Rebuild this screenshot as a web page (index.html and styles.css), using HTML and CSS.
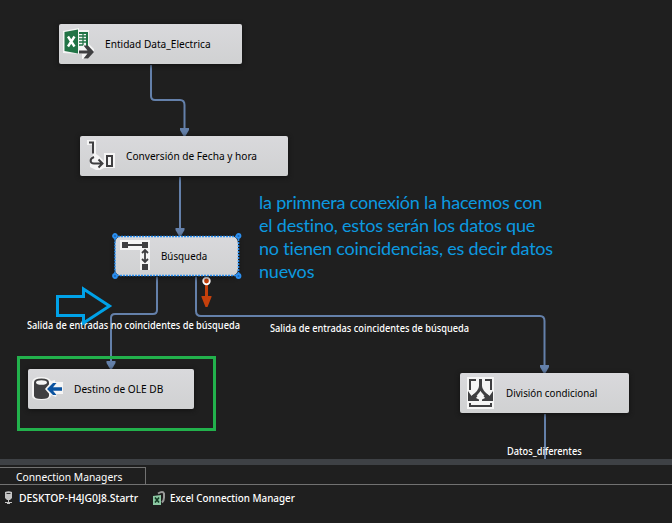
FILE: index.html
```html
<!DOCTYPE html>
<html lang="es">
<head>
<meta charset="utf-8">
<title>Data Flow</title>
<link rel="stylesheet" href="styles.css">
</head>
<body>
<main class="canvas">
  <svg class="wires" width="672" height="459" viewBox="0 0 672 459">
    <g class="wire">
      <path d="M151 65V96Q151 100 155 100H180Q184.500 100 184.500 105V130"/>
      <path d="M180 177V230"/>
      <path d="M157 277V310Q157 314 153 314H115Q111 314 111 318V363"/>
      <path d="M196 277V311Q196 316 201 316H540Q544.500 316 544.500 321V367"/>
      <path d="M545 414V459"/>
    </g>
    <g class="tip">
      <path d="M180 128h9v2l-3.500 6h-2l-3.500-6z"/>
      <path d="M175.500 228h9v2l-3.500 6h-2l-3.500-6z"/>
      <path d="M106.500 361h9v2l-3.500 6h-2l-3.500-6z"/>
      <path d="M540 365h9v2l-3.500 6h-2l-3.500-6z"/>
    </g>
    <path class="error" d="M205 284h3v12h3.500v1l-4 10h-2l-4-10v-1h3.500z"/>
    <circle class="error-dot" cx="206.500" cy="281" r="3.300"/>
  </svg>

  <section class="node source">
    <svg width="32" height="32" viewBox="0 0 32 32">
      <path fill="#f5f5f5" d="M0 3L16 0v2h10v14l5 5v3l-7 7h-5v-5L0 25z"/>
      <path fill="#217346" d="M1.500 4L15 1.500v24L1.500 23zM16 4h9v14h-2v-12h-7z"/>
      <path stroke="#217346" fill="none" stroke-width="1.300" d="M16 8h8M16 11h8M16 14h8M16 17h4M20 5v12"/>
      <path stroke="#fff" fill="none" stroke-width="2.400" d="M5 8.500l6.500 10M11.500 8.500l-6.500 10"/>
      <path fill="#3f3f41" d="M16 22.500h8.500l-4-5h4.500l6 6.500-6 6.500h-4.500l4-5H16z"/>
    </svg>
    <span>Entidad Data_Electrica</span>
  </section>

  <section class="node convert">
    <svg width="32" height="32" viewBox="0 0 32 32">
      <path fill="#f5f5f5" d="M3 0h9v14l3 2 5 5v-8h11v15H20l-4 2h-4l-6-3v-9l3-3V5H3z"/>
      <path fill="none" stroke="#3f3f41" stroke-width="2" d="M5 2.500h4V13.500M10 17c-5 2-4 6.500 0 6.500h7M14.500 19.500l4 4-4 4"/>
      <path fill="none" stroke="#3f3f41" stroke-width="2" d="M23 16h5v10h-5z"/>
    </svg>
    <span>Conversión de Fecha y hora</span>
  </section>

  <section class="node lookup">
    <svg width="32" height="32" viewBox="0 0 32 32">
      <path fill="#f5f5f5" d="M1 0h30v30H21V10H1z"/>
      <path fill="#3f3f41" d="M3 2h6v2h14V2h6v6h-6V6H9v2H3zM23 24h6v6h-6z"/>
      <path fill="none" stroke="#3f3f41" stroke-width="1.800" d="M26 10.500v11M23 13l3-3 3 3M23 19l3 3 3-3"/>
    </svg>
    <span>Búsqueda</span>
  </section>
  <svg class="selection" width="136" height="50" viewBox="0 0 136 50">
    <rect class="edge" x="5" y="4.500" width="123.500" height="39"/>
    <g class="handle"><circle cx="5" cy="4" r="2"/><circle cx="128.500" cy="4" r="2"/><circle cx="5" cy="44" r="2"/><circle cx="128.500" cy="44" r="2"/></g>
  </svg>

  <section class="node target">
    <svg width="32" height="32" viewBox="0 0 32 32">
      <path fill="#f5f5f5" d="M0 9Q1 4 9 4q8 0 10 4l4-1v2h8v12h-6l-1 3-5-2q0 5-9.500 5T0 23z"/>
      <path fill="#3f3f41" d="M2 9.500q0-4 7.500-4t7.500 4v13q0 3.500-7.500 3.500T2 22.500z"/>
      <ellipse cx="9.500" cy="9.500" rx="5.500" ry="2.300" fill="#f5f5f5"/>
      <path fill="#f5f5f5" d="M13 16l6-7v14z"/>
      <path fill="#0b53a0" d="M15 16l6-6h3.500l-3.500 4.200h9v3.600h-9l3.500 4.200H21z"/>
    </svg>
    <span>Destino de OLE DB</span>
  </section>

  <section class="node split">
    <svg width="32" height="32" viewBox="0 0 32 32">
      <path fill="#f5f5f5" d="M3 0h27v32H3z"/>
      <path fill="none" stroke="#3f3f41" stroke-width="2" d="M6 13V3h6M21 3h6v10M6 26v3h21v-3"/>
      <path fill="none" stroke="#3f3f41" stroke-width="3" d="M16.500 2v7q0 5-8 11M16.500 9q0 5 8 11"/>
      <path fill="#3f3f41" d="M4 14v10h11v-1.500l-3-1.500 1.500-2-3-2-3 2zM29 14v10H18v-1.500l3-1.500-1.500-2 3-2 3 2z"/>
    </svg>
    <span>División condicional</span>
  </section>

  <div class="frame"></div>
  <div class="caption nomatch">Salida de entradas no coincidentes de búsqueda</div>
  <div class="caption match">Salida de entradas coincidentes de búsqueda</div>
  <div class="caption differ">Datos_diferentes</div>
  <svg class="pointer" width="60" height="44" viewBox="0 0 60 44">
    <path d="M4.500 12.500H30.500V5L56.500 22 30.500 39V31.500H4.500z"/>
  </svg>
  <p class="note">la primnera conexión la hacemos con<br>el destino, estos serán los datos que<br>no tienen coincidencias, es decir datos<br>nuevos</p>
</main>
<footer class="managers">
  <div class="tabs"><div class="tab"><span>Connection Managers</span></div><div class="rest"></div></div>
  <div class="items">
    <div class="item server">
      <svg width="9" height="14" viewBox="0 0 9 14"><path fill="#c4c4c4" d="M1 1q3.500-1.500 7 0v6L6 9H5v2h3v1H6v1H3v-1H1v-1h3V9H3L1 7z"/><path fill="#333" d="M2.500 2h4v1h-4z"/></svg>
      <span>DESKTOP-H4JG0J8.Startr</span>
    </div>
    <div class="item excel">
      <svg width="14" height="14" viewBox="0 0 14 14"><path fill="none" stroke="#999" stroke-width="2" d="M5 2.500q5-3 6 0v4q0 3-2 5"/><path fill="#8cc8a3" d="M0 5l8-1v10H0z"/><path stroke="#143d25" stroke-width="1.600" d="M2 6.500l4 5M6 6.500l-4 5"/></svg>
      <span>Excel Connection Manager</span>
    </div>
  </div>
</footer>
</body>
</html>
```
FILE: styles.css
```css
* { box-sizing: border-box; }
body {
  margin: 0;
  width: 672px;
  height: 523px;
  overflow: hidden;
  display: flex;
  flex-direction: column;
  background: #1f1f1f;
  color: #fff;
  font: 11.5px/16px "Noto Sans", sans-serif;
}
.canvas { position: relative; height: 459px; flex: none; overflow: hidden; }
.wires { position: absolute; left: 0; top: 0; }
.wire { fill: none; stroke: #6480aa; stroke-width: 2; }
.tip { fill: #6480aa; }
.error { fill: #c5400c; }
.error-dot { fill: #c5400c; stroke: #fff; stroke-width: 1.8; }
.node {
  position: absolute;
  height: 40px;
  display: flex;
  align-items: center;
  padding-left: 4px;
  border-radius: 2px;
  background: linear-gradient(#d9d9dc, #d0d1d2);
  box-shadow: 0 1px 5px #111;
  color: #000;
  white-space: nowrap;
}
.node svg { flex: none; margin-right: 10px; }
.node span, .tab span, .item span { display: inline-block; transform: scaleX(0.88); transform-origin: left; }
.source { left: 59px; top: 24px; width: 183px; }
.convert { left: 80px; top: 136px; width: 208px; }
.lookup { left: 115px; top: 236px; width: 123px; border-radius: 7px; }
.target { left: 28px; top: 369px; width: 166px; }
.split { left: 460px; top: 373px; width: 169px; }
.lookup span, .split span { transform: scaleX(0.85); }
.selection { position: absolute; left: 110px; top: 232px; }
.edge { fill: none; stroke: #2b8ff0; stroke-width: 1.6; stroke-dasharray: 2 1; }
.handle { fill: #1d68b5; stroke: #2b8ff0; stroke-width: 1.8; }
.frame { position: absolute; left: 17px; top: 356px; width: 199px; height: 75px; border: 3px solid #22b14c; }
.caption {
  position: absolute;
  white-space: nowrap;
  font-size: 11px;
  line-height: 14px;
  font-weight: 500;
  transform: scaleX(0.84);
  transform-origin: left;
}
.nomatch { left: 27px; top: 318px; }
.match { left: 270px; top: 321px; }
.differ { left: 507px; top: 444px; }
.pointer { position: absolute; left: 53px; top: 284px; fill: none; stroke: #00a2e8; stroke-width: 3; }
.note {
  position: absolute;
  left: 259px;
  top: 190.5px;
  margin: 0;
  color: #0c9ae0;
  font: 18px/23.3px Lato, sans-serif;
  letter-spacing: -0.2px;
  white-space: nowrap;
}
.managers { flex: 1; border-top: 6px solid #3e4145; padding-top: 2px; }
.tabs { display: flex; height: 18px; }
.tab { width: 146px; border: 1px solid #717171; border-left: 0; padding-left: 16px; line-height: 17px; white-space: nowrap; }
.tab span { transform: scaleX(0.895); }
.rest { flex: 1; border-bottom: 1px solid #717171; }
.items { display: flex; padding: 5px 0 0 4px; font-weight: 500; }
.item { display: flex; align-items: center; white-space: nowrap; }
.server { width: 149px; gap: 6px; }
.server span { transform: scaleX(0.9); }
.excel { gap: 3px; }
.excel span { transform: scaleX(0.855); }
```
